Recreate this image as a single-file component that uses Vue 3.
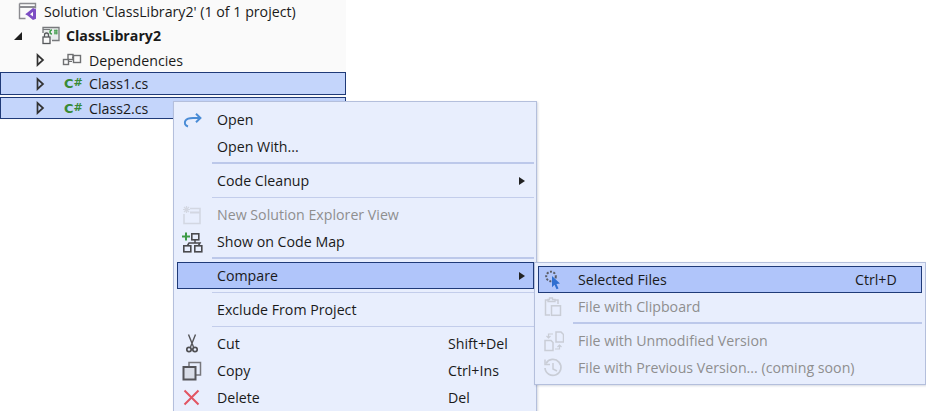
<script setup>
const mainRows = [
  { type: 'item', label: 'Open', icon: 'open' },
  { type: 'item', label: 'Open With...' },
  { type: 'sep', thick: true },
  { type: 'item', label: 'Code Cleanup', arrow: true },
  { type: 'sep' },
  { type: 'item', label: 'New Solution Explorer View', icon: 'newview', disabled: true },
  { type: 'item', label: 'Show on Code Map', icon: 'map' },
  { type: 'sep', thick: true },
  { type: 'item', label: 'Compare', arrow: true, active: true },
  { type: 'sep' },
  { type: 'item', label: 'Exclude From Project' },
  { type: 'sep' },
  { type: 'item', label: 'Cut', icon: 'cut', key: 'Shift+Del' },
  { type: 'item', label: 'Copy', icon: 'copy', key: 'Ctrl+Ins' },
  { type: 'item', label: 'Delete', icon: 'del', key: 'Del' }
]
const subRows = [
  { type: 'item', label: 'Selected Files', icon: 'pick', key: 'Ctrl+D', active: true },
  { type: 'item', label: 'File with Clipboard', icon: 'clip', disabled: true },
  { type: 'sep', thick: true },
  { type: 'item', label: 'File with Unmodified Version', icon: 'diff', disabled: true },
  { type: 'item', label: 'File with Previous Version... (coming soon)', icon: 'hist', disabled: true }
]
</script>

<template>
  <div class="page">
    <div class="tree">
      <div class="row lvl0">
        <svg class="ico" width="20" height="20" viewBox="0 0 20 20">
          <path d="M1.500 2.500h16v5M1.500 2.500v15h6" fill="none" stroke="#8b8b90" stroke-width="1.400" />
          <path d="M1.500 6h16" stroke="#8b8b90" stroke-width="2" />
          <path d="M7.500 13l2-1.600 5.500-4.400 3 1.200v9.600l-3 1.200-5.500-4.400-2-1.200zM15 10.800l-3 2.400 3 2.400z" fill="#7d4ec4" fill-rule="evenodd" />
        </svg>
        <span>Solution 'ClassLibrary2' (1 of 1 project)</span>
      </div>
      <div class="row lvl1">
        <span class="tri-filled"></span>
        <svg class="ico" width="20" height="20" viewBox="0 0 20 20">
          <path d="M2 8V2.500h16v13h-7" fill="#e9ecec" stroke="#77797c" stroke-width="1.300" />
          <path d="M2 4.500h7" stroke="#77797c" stroke-width="1" />
          <path d="M11 5a2 2 0 0 0 0 4" fill="none" stroke="#3e9a48" stroke-width="1.500" />
          <path d="M13 5.800h3.500M13 8h3.500M14 4.500v5M15.800 4.500v5" stroke="#3e9a48" stroke-width="1" />
          <path d="M3.500 12V10a2 2 0 0 1 4 0v2" fill="none" stroke="#55575a" stroke-width="1.300" />
          <rect x="2" y="12" width="7" height="6.500" fill="#fafafa" stroke="#55575a" stroke-width="1.300" />
        </svg>
        <b>ClassLibrary2</b>
      </div>
      <div class="row lvl2">
        <svg class="tri" width="9" height="14" viewBox="0 0 9 14"><path d="M1.500 2v10L7 7z" fill="none" stroke="#333" stroke-width="1.700" /></svg>
        <svg class="ico dep" width="20" height="16" viewBox="0 0 20 16">
          <path d="M7 9.500h3M10 5.500h2" stroke="#6f7072" stroke-width="1.200" />
          <rect x="1.500" y="7.500" width="5" height="5" fill="none" stroke="#6f7072" stroke-width="1.400" />
          <rect x="6" y="2.500" width="5" height="5" fill="none" stroke="#6f7072" stroke-width="1.400" />
          <rect x="11.500" y="3.500" width="7" height="7" fill="none" stroke="#6f7072" stroke-width="1.400" />
        </svg>
        <span>Dependencies</span>
      </div>
      <div class="row lvl2 sel first">
        <svg class="tri" width="9" height="14" viewBox="0 0 9 14"><path d="M1.500 2v10L7 7z" fill="none" stroke="#333" stroke-width="1.700" /></svg>
        <span class="cs"><i>C</i><em>#</em></span>
        <span>Class1.cs</span>
      </div>
      <div class="row lvl2 sel second">
        <svg class="tri" width="9" height="14" viewBox="0 0 9 14"><path d="M1.500 2v10L7 7z" fill="none" stroke="#333" stroke-width="1.700" /></svg>
        <span class="cs"><i>C</i><em>#</em></span>
        <span>Class2.cs</span>
      </div>
    </div>

    <div class="menu main">
      <template v-for="(r, i) in mainRows" :key="i">
        <div v-if="r.type === 'sep'" class="sep" :class="{ thick: r.thick }"></div>
        <div v-else class="item" :class="{ disabled: r.disabled, active: r.active }">
          <span class="slot">
            <svg v-if="r.icon === 'open'" width="22" height="20" viewBox="0 0 22 20">
              <path d="M7 16.500C4 15.500 3 13 4.500 10.500 5.700 8.700 8 8 12 8h7" fill="none" stroke="#4a8cd6" stroke-width="2" />
              <path d="M15 3.800L19.400 8 15 12.200" fill="none" stroke="#4a8cd6" stroke-width="2" />
            </svg>
            <svg v-else-if="r.icon === 'newview'" width="22" height="20" viewBox="0 0 22 20" opacity="0.75">
              <path d="M9 3.500h10v15H3V9" fill="none" stroke="#ccd0da" stroke-width="1.600" />
              <path d="M9 7.500h10" stroke="#ccd0da" stroke-width="2" />
              <path d="M5.500 1v7M2 4.500h7M3 2l5 5M8 2L3 7" stroke="#ccd0da" stroke-width="1.200" />
            </svg>
            <svg v-else-if="r.icon === 'map'" width="22" height="22" viewBox="0 0 22 22">
              <path d="M5 1.500v8M1 5.500h8" stroke="#3c9a46" stroke-width="2" />
              <rect x="10.800" y="2.800" width="7" height="6" fill="none" stroke="#4a4a4e" stroke-width="1.600" />
              <rect x="2.800" y="14.800" width="7" height="6" fill="none" stroke="#4a4a4e" stroke-width="1.600" />
              <rect x="13.800" y="14.800" width="7" height="6" fill="none" stroke="#4a4a4e" stroke-width="1.600" />
              <path d="M14 9v3M6.500 14.500L8 12h11l-1.500 2.500" fill="none" stroke="#4a4a4e" stroke-width="1.500" />
            </svg>
            <svg v-else-if="r.icon === 'cut'" width="22" height="20" viewBox="0 0 22 20">
              <path d="M7.500 0.500l5 12.500M14.500 0.500L9.500 13" stroke="#55555a" stroke-width="1.400" />
              <circle cx="8" cy="15.500" r="2.200" fill="none" stroke="#4f4f53" stroke-width="1.700" />
              <circle cx="14" cy="15.500" r="2.200" fill="none" stroke="#4f4f53" stroke-width="1.700" />
            </svg>
            <svg v-else-if="r.icon === 'copy'" width="22" height="20" viewBox="0 0 22 20">
              <path d="M8 6V1.500h11.500v12.500H15" fill="none" stroke="#77777c" stroke-width="1.500" />
              <rect x="2.500" y="6" width="12" height="12.500" fill="#d9dde8" stroke="#55555a" stroke-width="2" />
            </svg>
            <svg v-else-if="r.icon === 'del'" width="22" height="20" viewBox="0 0 22 20">
              <path d="M3.500 2.500l14 14M17.500 2.500l-14 14" stroke="#e25563" stroke-width="2" />
            </svg>
          </span>
          <span class="label">{{ r.label }}</span>
          <span v-if="r.key" class="key">{{ r.key }}</span>
          <span v-if="r.arrow" class="arrow"></span>
        </div>
      </template>

      <div class="menu sub">
        <template v-for="(r, i) in subRows" :key="i">
          <div v-if="r.type === 'sep'" class="sep" :class="{ thick: r.thick }"></div>
          <div v-else class="item" :class="{ disabled: r.disabled, active: r.active }">
            <span class="slot">
              <svg v-if="r.icon === 'pick'" width="22" height="22" viewBox="0 0 22 22">
                <circle cx="9" cy="7.500" r="4.800" fill="none" stroke="#5b5d66" stroke-width="2" stroke-dasharray="2 1.500" />
                <path d="M10 7l8 7.500-3.500.5 2 4.500-2 .8-2-4.500-2.500 2.500z" fill="#2f6fd0" />
              </svg>
              <svg v-else-if="r.icon === 'clip'" width="22" height="22" viewBox="0 0 22 22">
                <path d="M6.500 4H3.500v15H8M13 4h3v4" fill="none" stroke="#c9cdd6" stroke-width="1.500" />
                <path d="M6 5.500V3.500h1.500V2h3v1.500H13v2z" fill="none" stroke="#c9cdd6" stroke-width="1.300" />
                <rect x="9.500" y="9.800" width="9" height="9.500" fill="none" stroke="#c9cdd6" stroke-width="1.500" />
              </svg>
              <svg v-else-if="r.icon === 'diff'" width="22" height="22" viewBox="0 0 22 22">
                <path d="M3 10.500h6l2 2v8H3z" fill="none" stroke="#c9cdd6" stroke-width="1.500" />
                <path d="M14 2h5l2.500 2.500V12H14z" fill="none" stroke="#c9cdd6" stroke-width="1.500" />
                <path d="M11 4H6.500v4M4.500 6l2 2 2-2M13 19h4.500v-4M15.500 17l2-2 2 2" fill="none" stroke="#c9cdd6" stroke-width="1.200" />
              </svg>
              <svg v-else-if="r.icon === 'hist'" width="22" height="22" viewBox="0 0 22 22">
                <path d="M4 6.500A8 8 0 1 1 3 11" fill="none" stroke="#c9cdd6" stroke-width="1.700" />
                <path d="M3 2.500v5h5" fill="none" stroke="#c9cdd6" stroke-width="1.500" />
                <path d="M11 6v6l4 2" fill="none" stroke="#c9cdd6" stroke-width="1.500" />
              </svg>
            </span>
            <span class="label">{{ r.label }}</span>
            <span v-if="r.key" class="key">{{ r.key }}</span>
          </div>
        </template>
      </div>
    </div>
  </div>
</template>

<style>
html, body { margin: 0; background: #fff; }
</style>

<style scoped>
.page {
  position: relative;
  width: 926px;
  height: 411px;
  overflow: hidden;
  background: #fff;
  font-family: "Open Sans", "Noto Sans", sans-serif;
  font-size: 14.2px;
  color: #1a1a1a;
}
.tree { width: 346px; background: #fafafa; padding-bottom: 1px; }
.row {
  display: flex;
  align-items: center;
  height: 24px;
  box-sizing: border-box;
  white-space: nowrap;
}
.row b { font-weight: 700; }
.lvl0 { padding-left: 18px; margin-top: -1px; }
.lvl0 .ico { margin-right: 6px; }
.lvl1 { padding-left: 14px; }
.lvl1 .ico { margin: 0 5px 0 19px; }
.lvl2 { padding-left: 36px; margin-top: 1px; }
.tri { flex: none; }
.dep { margin: 0 7px 0 17px; }
.tri-filled {
  width: 0; height: 0;
  border-style: solid;
  border-width: 0 0 8px 8px;
  border-color: transparent transparent #1e1e1e transparent;
  margin-top: 1px;
}
.sel {
  background: #c4d5fb;
  border: 1px solid #1f3a78;
  padding-left: 35px;
  width: 346px;
}
.first { height: 23px; margin-top: 0; margin-bottom: 2px; }
.second { height: 22px; margin-top: 0; }
.cs { width: 18px; margin: 0 7px 0 19px; display: flex; align-items: center; color: #388a34; line-height: 1; font-family: "DejaVu Sans", sans-serif; flex: none; }
.cs i { font-style: normal; font-weight: 700; font-size: 13px; }
.cs em { font-style: normal; font-weight: 700; font-size: 11px; margin-left: 0; margin-top: -2px; }

.menu {
  position: absolute;
  box-sizing: border-box;
  background: #e8eefd;
  border: 1px solid #b4bfdc;
  box-shadow: 1px 1px 2px rgba(90, 100, 130, 0.25);
}
.main {
  left: 173px;
  top: 101px;
  width: 364px;
  height: 330px;
  padding: 4px 2px 4px 3px;
}
.sub {
  left: 360px;
  top: 160px;
  width: 392px;
  height: 123px;
  padding: 3px;
  z-index: 2;
}
.item {
  display: flex;
  align-items: center;
  height: 27px;
  box-sizing: border-box;
  border: 1px solid transparent;
  white-space: nowrap;
  position: relative;
}
.slot { width: 39px; padding-right: 12px; box-sizing: border-box; flex: none; display: flex; justify-content: center; align-items: center; }
.label { flex: 1; }
.main .key { position: absolute; left: 270px; }
.sub .key { position: absolute; left: 316px; }
.disabled { color: #8f8f8f; }
.active { background: #b0c5fa; border-color: #1f3a78; }
.sep { height: 1px; margin: 3px 0 3px 35px; background: #c3cdeb; }
.sep.thick { height: 2px; margin: 2px 0 3px 35px; background: #bcc8ea; }
.arrow {
  width: 0; height: 0;
  border-style: solid;
  border-width: 4.500px 0 4.500px 6px;
  border-color: transparent transparent transparent #222;
  margin-right: 8px;
}
</style>
